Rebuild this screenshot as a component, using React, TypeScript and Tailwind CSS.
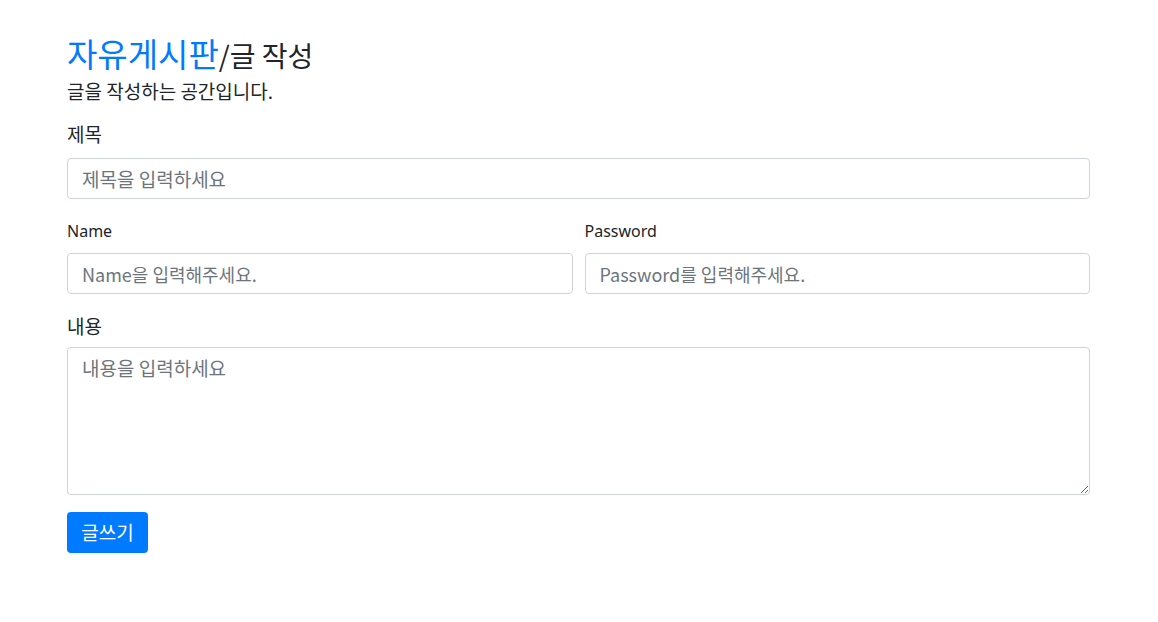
import React from 'react';

const inputCls =
  'block w-full h-[41px] px-[14px] text-[#495057] bg-white border border-[#ced4da] rounded-[4px] placeholder:text-[#6c757d] outline-none';

export default function App() {
  return (
    <div className="min-h-screen bg-white pl-[67px] pr-[68px] pt-[33px] text-[#212529] font-['Noto_Sans_CJK_KR','Noto_Sans',sans-serif]">
      {/* page title */}
      <h2 className="text-[33px] leading-[40px] font-normal mb-[2px]">
        <a className="text-[#007bff]">자유게시판</a>
        <small className="text-[28px] text-[#212529]">/글 작성</small>
      </h2>
      <p className="text-[19px] leading-[28px] mb-[15px]">글을 작성하는 공간입니다.</p>

      <form onSubmit={(e) => e.preventDefault()}>
        <div className="mb-[18px]">
          <label className="block text-[19px] leading-[28px] mb-[10px]">제목</label>
          <input className={`${inputCls} text-[19px]`} placeholder="제목을 입력하세요" />
        </div>

        <div className="flex gap-[12px] mb-[18px]">
          <div className="flex-1">
            <label className="block text-[16px] leading-[28px] mb-[8px] font-['Noto_Sans','Noto_Sans_CJK_KR',sans-serif]">
              Name
            </label>
            <input className={`${inputCls} text-[18px]`} placeholder="Name을 입력해주세요." />
          </div>
          <div className="flex-1">
            <label className="block text-[16px] leading-[28px] mb-[8px] font-['Noto_Sans','Noto_Sans_CJK_KR',sans-serif]">
              Password
            </label>
            <input
              type="password"
              className={`${inputCls} text-[18px]`}
              placeholder="Password를 입력해주세요."
            />
          </div>
        </div>

        <div className="mb-[17px]">
          <label className="block text-[19px] leading-[28px] mb-[7px]">내용</label>
          <textarea
            className="block w-full h-[148px] px-[14px] py-[6px] text-[19px] leading-[28px] text-[#495057] border border-[#ced4da] rounded-[4px] placeholder:text-[#6c757d] outline-none"
            placeholder="내용을 입력하세요"
          />
        </div>

        <button
          type="submit"
          className="h-[41px] w-[81px] rounded-[4px] bg-[#007bff] text-white text-[19px]"
        >
          글쓰기
        </button>
      </form>
    </div>
  );
}
